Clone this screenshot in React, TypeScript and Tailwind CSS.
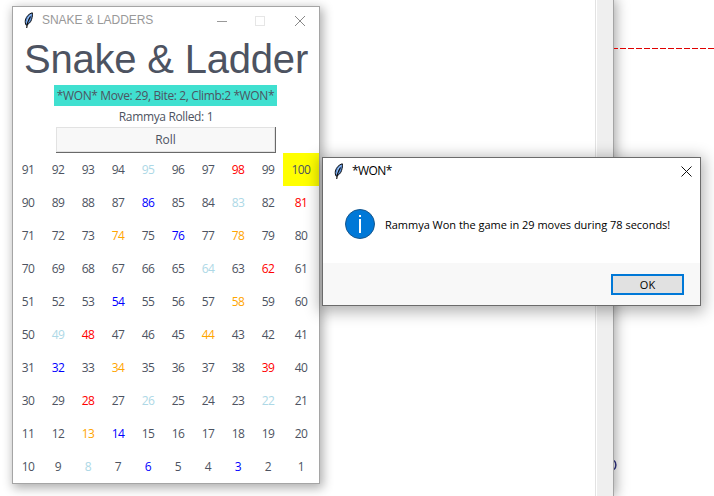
import React from "react";

const UI = "font-['Open_Sans','Noto_Sans',sans-serif]";

const ROWS: number[][] = Array.from({ length: 10 }, (_, r) => {
  const low = (9 - r) * 10 + 1;
  const row = Array.from({ length: 10 }, (_, i) => low + i);
  const descending = [90, 70, 50, 30, 10].includes(low + 9);
  return descending ? row.reverse() : row;
});

const TONES: Record<string, number[]> = {
  "text-[#ff0000]": [98, 81, 62, 48, 39, 28],
  "text-[#0000ff]": [86, 76, 54, 32, 14, 6, 3],
  "text-[#ffa500]": [74, 78, 58, 44, 34, 13],
  "text-[#add8e6]": [95, 83, 64, 49, 26, 22, 8],
};

function tone(n: number) {
  const hit = Object.entries(TONES).find(([, list]) => list.includes(n));
  return hit ? hit[0] : "text-[#4d5361]";
}

function Feather() {
  return (
    <svg width="10" height="17" viewBox="0 0 10 17" className="shrink-0">
      <path d="M8.3 .8C5.2 1.5 2.2 4.5 1.4 8c-.4 2 0 4 .7 5.2C4.5 12.400 7 10 7.600 7.400 8.300 5 8.800 2.700 8.300.8Z" fill="#5b8fd8" stroke="#111" strokeWidth="1" />
      <path d="M7 2.500C4.600 4.500 3.300 8 3 11" fill="none" stroke="#b7d7ff" strokeWidth="1" />
      <path d="M6.500 4.500C4.500 7.500 3 11 2.700 16" fill="none" stroke="#111" strokeWidth="1.100" />
    </svg>
  );
}

function Board() {
  return (
    <div className="grid grid-cols-[repeat(9,30px)_36px] auto-rows-[33px]">
      {ROWS.flat().map((n) => (
        <div
          key={n}
          className={`flex items-center justify-center pt-px text-[12px] leading-4 tracking-[-0.6px] ${tone(n)} ${n === 100 ? "bg-[#ffff00]" : ""}`}
        >
          {n}
        </div>
      ))}
    </div>
  );
}

function GameWindow() {
  return (
    <section className={`absolute left-3 top-1.5 flex h-[478px] w-[308px] flex-col border border-[#a5a5a5] bg-white text-[#4d5361] shadow-[2px_3px_10px_1px_rgba(0,0,0,0.32)] ${UI}`}>
      <header className="flex h-[26px] shrink-0 items-center pl-[11px]">
        <Feather />
        <span className="ml-2 whitespace-nowrap font-['Liberation_Sans',Arial,sans-serif] text-[12px] leading-4 tracking-[-0.05px] text-[#999]">SNAKE &amp; LADDERS</span>
        <svg width="89" height="12" viewBox="0 0 89 12" className="ml-[63px] mt-[-1px]" fill="none">
          <path d="M1 7.500h10" stroke="#999" />
          <rect x="39.500" y="2.500" width="9" height="9" stroke="#e6e6e6" />
          <path d="M79 2l10 10M89 2l-10 10" stroke="#888" />
        </svg>
      </header>
      <h1 className="flex h-[52px] shrink-0 items-start justify-center whitespace-nowrap pt-[3px] font-['Liberation_Sans',Arial,sans-serif] text-[40px] leading-[46px] tracking-[-0.2px]">Snake &amp; Ladder</h1>
      <div className="ml-[41px] flex h-[21px] w-[223px] shrink-0 items-center justify-center whitespace-nowrap bg-[#40e0d0] text-[12px] tracking-[-0.38px]">*WON* Move: 29, Bite: 2, Climb:2 *WON*</div>
      <div className="flex h-[21px] shrink-0 items-center justify-center whitespace-nowrap text-[12px] tracking-[-0.35px]">Rammya Rolled: 1</div>
      <button className="ml-[43px] flex h-[26px] w-[220px] shrink-0 items-center justify-center border-b border-r border-[#696969] bg-[#f8f8f8] text-[12px] leading-4 shadow-[inset_0_0_0_1px_#e2e2e2]">Roll</button>
      <Board />
    </section>
  );
}

function WonDialog() {
  return (
    <section className={`absolute left-[322px] top-[157px] flex h-[149px] w-[379px] flex-col border border-[#6b6b6b] bg-white text-black shadow-[0_3px_14px_3px_rgba(0,0,0,0.3)] ${UI}`}>
      <header className="flex h-[26px] shrink-0 items-center pl-[11px] pr-2">
        <Feather />
        <span className="ml-2 text-[12px] leading-4 tracking-[-0.6px]">*WON*</span>
        <svg width="11" height="11" viewBox="0 0 11 11" className="ml-auto" stroke="#111">
          <path d="M.5.500l10 10M10.500.500l-10 10" />
        </svg>
      </header>
      <div className="flex h-[79px] shrink-0 items-center pl-[22px]">
        <svg width="30" height="30" viewBox="0 0 30 30">
          <circle cx="15" cy="15" r="14.500" fill="#0078d7" stroke="#17578d" />
          <rect x="14" y="6" width="2" height="2" fill="white" />
          <rect x="14" y="10" width="2" height="14" fill="white" />
        </svg>
        <p className="ml-[10px] whitespace-nowrap pt-0.5 text-[11px] leading-4 tracking-[-0.02px]">Rammya Won the game in 29 moves during 78 seconds!</p>
      </div>
      <footer className="flex flex-1 justify-end bg-[#f8f8f8] pr-4 pt-[11px]">
        <button className="flex h-[21px] w-[73px] items-center justify-center border-2 border-[#0078d7] bg-[#e1e1e1] text-[11px] leading-4">OK</button>
      </footer>
    </section>
  );
}

export default function App() {
  return (
    <main className="relative flex h-[496px] w-[714px] overflow-hidden bg-white">
      <div className="relative z-10 flex w-[614px] shrink-0 border-r border-[#a5a5a5] bg-white shadow-[0_0_13px_1px_rgba(0,0,0,0.4)]">
        <div className="flex-1" />
        <div className="w-[18px] border-l border-[#e2e2e2] pl-px">
          <div className="h-full bg-[#efefef]" />
        </div>
      </div>
      <div className="flex-1 overflow-hidden">
        <svg width="101" height="496" viewBox="0 0 101 496" className="relative z-20 -ml-px">
          <path d="M0 48.500H101" stroke="#e00000" strokeDasharray="6 2" strokeDashoffset="1" />
          <path d="M1 460.500C3.500 462.500 3.500 467.500 1 469.500" stroke="#25286b" strokeWidth="1.500" fill="none" />
        </svg>
      </div>
      <div className="absolute inset-0 z-30">
        <GameWindow />
        <WonDialog />
      </div>
    </main>
  );
}
